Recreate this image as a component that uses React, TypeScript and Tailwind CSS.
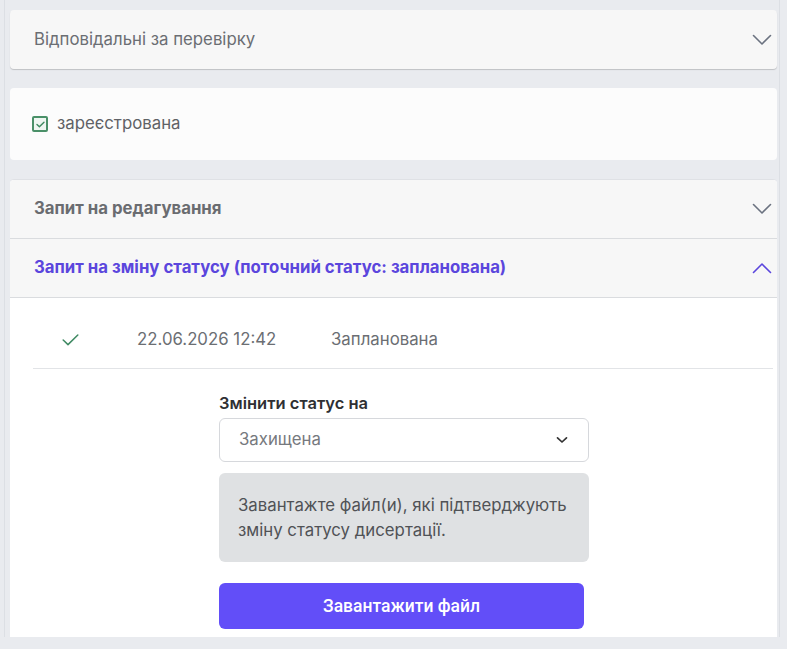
import React from "react";

const Chevron = ({ up = false, color = "#6b7280" }: { up?: boolean; color?: string }) => (
  <svg width="20" height="12" viewBox="0 0 20 12" fill="none">
    <path
      d={up ? "M1.5 10.5 L10 2 L18.5 10.5" : "M1.5 1.5 L10 10 L18.5 1.5"}
      stroke={color}
      strokeWidth="1.6"
      strokeLinecap="round"
      strokeLinejoin="round"
    />
  </svg>
);

export default function App() {
  return (
    <div
      className="w-[787px] h-[649px] bg-[#e9ebef] overflow-hidden relative"
      style={{ fontFamily: "Inter, 'Noto Sans', sans-serif" }}
    >
      <div className="absolute left-[4px] top-0 h-[637px] w-px bg-[#dcdfe4]" />
      <div className="absolute left-[779px] top-0 h-[637px] w-px bg-[#dcdfe4]" />
      <div className="ml-[10px] w-[767px] pt-[10px] flex flex-col">
        {/* Card 1 */}
        <div className="h-[59px] bg-[#f7f7f7] rounded-[4px] shadow-[0_1px_1px_rgba(0,0,0,0.18)] flex items-center justify-between pl-[24px] pr-[5px] pt-px">
          <span className="text-[16.8px] text-[#6b6e73]">Відповідальні за перевірку</span>
          <Chevron />
        </div>

        {/* Card 2 */}
        <div className="mt-[19px] h-[72px] bg-[#fcfcfc] rounded-[4px] flex items-center pl-[22px]">
          <div className="w-[16px] h-[16px] rounded-[2px] border-2 border-[#4a9068] bg-[#eef6f1] flex items-center justify-center">
            <svg width="9" height="7" viewBox="0 0 9 7" fill="none">
              <path d="M1 3.5 L3.4 5.8 L8 1.2" stroke="#3f8a60" strokeWidth="1.4" strokeLinecap="round" strokeLinejoin="round" />
            </svg>
          </div>
          <span className="ml-[9px] text-[16.8px] text-[#5f6266]">зареєстрована</span>
        </div>

        {/* Card 3 */}
        <div className="mt-[19px] bg-white rounded-t-[4px] border-t border-[#dfe1e5] flex flex-col h-[458px]">
          <div className="h-[59px] bg-[#f7f7f7] border-b border-[#dadcdf] flex items-center justify-between pl-[24px] pr-[5px] rounded-t-[4px]">
            <span className="text-[16.8px] font-bold text-[#6a6c70]">Запит на редагування</span>
            <Chevron />
          </div>
          <div className="h-[59px] bg-[#f7f7f7] border-b border-[#dadcdf] flex items-center justify-between pl-[24px] pr-[5px]">
            <span className="text-[16.8px] font-bold text-[#5b46dd]">
              Запит на зміну статусу (поточний статус: запланована)
            </span>
            <Chevron up color="#5b46dd" />
          </div>

          <div className="ml-[23px] mr-[4px] h-[71px] border-b border-[#e2e4e7] flex items-center pt-[13px]">
            <div className="w-[104px] flex pl-[29px]">
              <svg width="17" height="12" viewBox="0 0 17 12" fill="none">
                <path d="M1.2 6 L6 10.6 L15.8 1" stroke="#3f8a63" strokeWidth="1.5" strokeLinecap="round" strokeLinejoin="round" />
              </svg>
            </div>
            <span className="w-[194px] text-[16.8px] text-[#6b6e73]">22.06.2026 12:42</span>
            <span className="text-[16.8px] text-[#6b6e73]">Запланована</span>
          </div>

          <div className="ml-[209px] w-[370px] flex flex-col pt-[24px]">
            <span className="text-[16.5px] font-semibold text-[#2f3033] leading-[20px]">Змінити статус на</span>
            <div className="mt-[5px] h-[44px] border border-[#d6d8dc] rounded-[6px] bg-white flex items-center justify-between pl-[19px] pr-[20px]">
              <span className="text-[16.8px] text-[#76797e]">Захищена</span>
              <svg width="12" height="8" viewBox="0 0 12 8" fill="none">
                <path d="M1.5 1.8 L6 6 L10.5 1.8" stroke="#333" strokeWidth="1.7" strokeLinecap="round" strokeLinejoin="round" />
              </svg>
            </div>
            <div className="mt-[11px] h-[89px] bg-[#dfe1e3] rounded-[6px] px-[19px] flex items-center">
              <span className="text-[16.8px] leading-[25px] text-[#505256]">
                Завантажте файл(и), які підтверджують зміну статусу дисертації.
              </span>
            </div>
            <button
              className="mt-[21px] w-[365px] h-[46px] bg-[#624ef8] rounded-[6px] text-white text-[17.5px] font-medium flex items-center justify-center"
              style={{ fontFamily: "Roboto, Inter, sans-serif" }}
            >
              Завантажити файл
            </button>
          </div>
        </div>
      </div>
    </div>
  );
}
